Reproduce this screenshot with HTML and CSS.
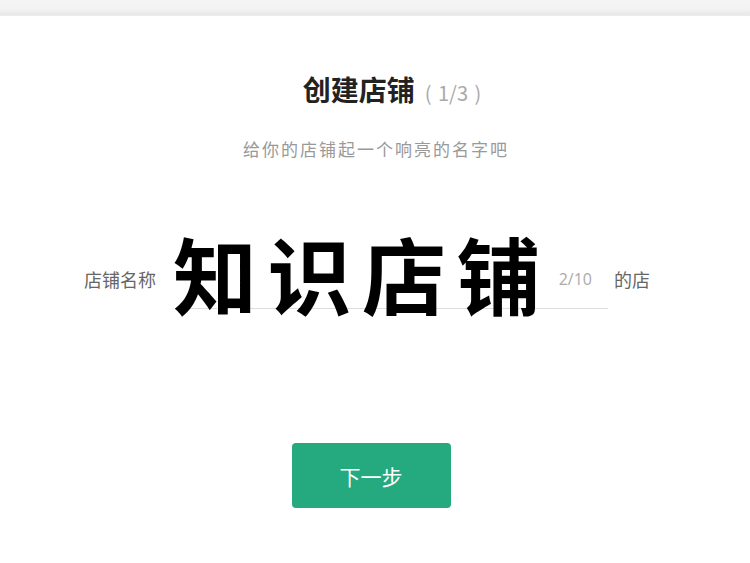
FILE: index.html
```html
<!DOCTYPE html>
<html lang="zh-CN">
<head>
<meta charset="utf-8">
<title>创建店铺</title>
<link rel="stylesheet" href="styles.css">
</head>
<body>
<div class="topbar"></div>
<main class="page">
  <h1 class="title"><span class="title-main">创建店铺</span><span class="title-step">( 1/3 )</span></h1>
  <p class="subtitle">给你的店铺起一个响亮的名字吧</p>
  <div class="name-row">
    <span class="label">店铺名称</span>
    <div class="field">
      <span class="big-text">知识店铺</span>
      <span class="counter">2/10</span>
    </div>
    <span class="suffix">的店</span>
  </div>
  <div class="actions">
    <button class="next-btn" type="button">下一步</button>
  </div>
</main>
</body>
</html>
```

FILE: styles.css
```css
html, body {
  margin: 0;
  padding: 0;
  background: #ffffff;
}
body {
  width: 750px;
  height: 563px;
  overflow: hidden;
  font-family: "Noto Sans CJK SC", "Noto Sans", sans-serif;
  color: #333;
}
.topbar {
  height: 16px;
  background: linear-gradient(to bottom, #f4f4f4 0%, #f2f2f2 60%, #e8e8e8 90%, #eeeeee 100%);
}
.page {
  display: flex;
  flex-direction: column;
}
.title {
  margin: 53px 0 0 0;
  display: flex;
  justify-content: center;
  align-items: baseline;
  padding-left: 34px;
  line-height: 40px;
}
.title-main {
  font-size: 28px;
  font-weight: 700;
  color: #222;
}
.title-step {
  font-size: 20px;
  font-weight: 400;
  color: #aaa;
  margin-left: 10px;
  word-spacing: 2px;
}
.subtitle {
  margin: 24px 0 0 0;
  text-align: center;
  font-size: 17px;
  line-height: 24px;
  letter-spacing: 2px;
  color: #999;
  padding-left: 2px;
}
.name-row {
  margin-top: 104px;
  display: flex;
  align-items: flex-start;
  padding-left: 84px;
}
.label {
  font-size: 18px;
  line-height: 28px;
  color: #666;
  width: 91px;
}
.field {
  position: relative;
  width: 433px;
  height: 28px;
  padding-bottom: 15px;
  border-bottom: 1px solid #dddddd;
  display: flex;
  justify-content: flex-end;
  box-sizing: content-box;
}
.counter {
  position: relative;
  z-index: 1;
  font-family: "Open Sans", "Liberation Sans", sans-serif;
  font-size: 16px;
  line-height: 28px;
  color: #aaa;
  margin-right: 16px;
}
.big-text {
  position: absolute;
  left: -2px;
  top: -52px;
  font-size: 84px;
  line-height: 120px;
  font-weight: 700;
  letter-spacing: 10.5px;
  color: #000;
  white-space: nowrap;
}
.suffix {
  font-size: 18px;
  line-height: 28px;
  color: #666;
  margin-left: 6px;
}
.actions {
  margin-top: 134px;
  display: flex;
  justify-content: center;
}
.next-btn {
  width: 159px;
  height: 65px;
  border: none;
  border-radius: 4px;
  background: #25a97e;
  color: #ffffff;
  font-family: "Noto Sans CJK SC", sans-serif;
  font-size: 21px;
  margin-left: -8px;
  cursor: pointer;
}
```
